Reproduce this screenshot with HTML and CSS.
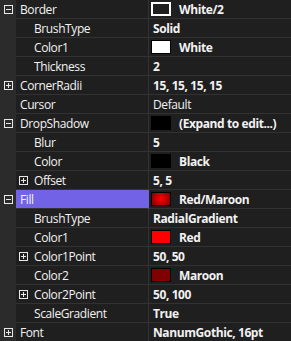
FILE: index.html
```html
<!DOCTYPE html>
<html lang="en">
<head>
    <meta charset="UTF-8">
    <title>Properties</title>
    <link rel="stylesheet" href="styles.css">
</head>
<body>
    <div class="grid">
        <div class="row"><span class="gut"><i class="box minus"></i></span><span class="name">Border</span><span class="val b"><i class="sw sw-outline"></i>White/2</span></div>
        <div class="row"><span class="gut"></span><span class="name l1">BrushType</span><span class="val b">Solid</span></div>
        <div class="row"><span class="gut"></span><span class="name l1">Color1</span><span class="val b"><i class="sw sw-white"></i>White</span></div>
        <div class="row"><span class="gut"></span><span class="name l1">Thickness</span><span class="val b">2</span></div>
        <div class="row"><span class="gut"><i class="box plus"></i></span><span class="name">CornerRadii</span><span class="val b">15, 15, 15, 15</span></div>
        <div class="row"><span class="gut"></span><span class="name">Cursor</span><span class="val">Default</span></div>
        <div class="row"><span class="gut"><i class="box minus"></i></span><span class="name">DropShadow</span><span class="val b"><i class="sw sw-black"></i>(Expand to edit...)</span></div>
        <div class="row"><span class="gut"></span><span class="name l1">Blur</span><span class="val b">5</span></div>
        <div class="row"><span class="gut"></span><span class="name l1">Color</span><span class="val b"><i class="sw sw-black"></i>Black</span></div>
        <div class="row"><span class="gut"></span><span class="name l1"><i class="box plus sub"></i>Offset</span><span class="val b">5, 5</span></div>
        <div class="row sel"><span class="gut"><i class="box minus"></i></span><span class="name">Fill</span><span class="val b"><i class="sw sw-radial"></i>Red/Maroon</span></div>
        <div class="row"><span class="gut"></span><span class="name l1">BrushType</span><span class="val b">RadialGradient</span></div>
        <div class="row"><span class="gut"></span><span class="name l1">Color1</span><span class="val b"><i class="sw sw-red"></i>Red</span></div>
        <div class="row"><span class="gut"></span><span class="name l1"><i class="box plus sub"></i>Color1Point</span><span class="val b">50, 50</span></div>
        <div class="row"><span class="gut"></span><span class="name l1">Color2</span><span class="val b"><i class="sw sw-maroon"></i>Maroon</span></div>
        <div class="row"><span class="gut"></span><span class="name l1"><i class="box plus sub"></i>Color2Point</span><span class="val b">50, 100</span></div>
        <div class="row"><span class="gut"></span><span class="name l1">ScaleGradient</span><span class="val b">True</span></div>
        <div class="row"><span class="gut"><i class="box plus"></i></span><span class="name">Font</span><span class="val b">NanumGothic, 16pt</span></div>
    </div>
</body>
</html>
```
FILE: styles.css
```css
*{
    padding: 0;
    margin: 0;
    box-sizing: border-box;
}
body{
    background: #1f1f1f;
    font-family: "Open Sans", "Noto Sans", sans-serif;
    font-size: 12px;
    letter-spacing: -0.4px;
    color: #f2f2f2;
    overflow: hidden;
}
.grid{
    width: 291px;
}
.row{
    display: grid;
    grid-template-columns: 16px 133px 1fr;
    height: 19px;
}
.gut{
    background: #2b2b2b;
    position: relative;
}
.name,
.val{
    display: flex;
    align-items: center;
    height: 19px;
    border-bottom: 1px solid #323232;
    white-space: nowrap;
    overflow: hidden;
}
.name{
    padding-left: 4px;
    border-right: 1px solid #323232;
}
.name.l1{
    padding-left: 18px;
    position: relative;
}
.val{
    padding-left: 4px;
}
.val.b{
    font-weight: bold;
}
.sel .name{
    background: #7262e6;
    border-right-color: #7262e6;
}
/* expand / collapse boxes */
.box{
    position: absolute;
    top: 5px;
    left: 4px;
    width: 9px;
    height: 9px;
    border: 1px solid #e8e8e8;
}
.box.sub{
    left: 3px;
}
.box::before,
.box::after{
    content: "";
    position: absolute;
    background: #e8e8e8;
}
.box::before{
    left: 1px;
    top: 3px;
    width: 5px;
    height: 1px;
}
.plus::after{
    left: 3px;
    top: 1px;
    width: 1px;
    height: 5px;
}
/* colour swatches */
.sw{
    display: inline-block;
    width: 20px;
    height: 14px;
    margin-left: -2px;
    margin-right: 8px;
    border: 1px solid #000;
    flex: none;
}
.sw-outline{
    border: 2px solid #fff;
    background: #1f1f1f;
}
.sw-white{
    background: #fff;
}
.sw-black{
    background: #000;
}
.sw-red{
    background: #ff0000;
}
.sw-maroon{
    background: #800000;
}
.sw-radial{
    background: radial-gradient(circle, #ff0000 0%, #800000 100%);
}
```
